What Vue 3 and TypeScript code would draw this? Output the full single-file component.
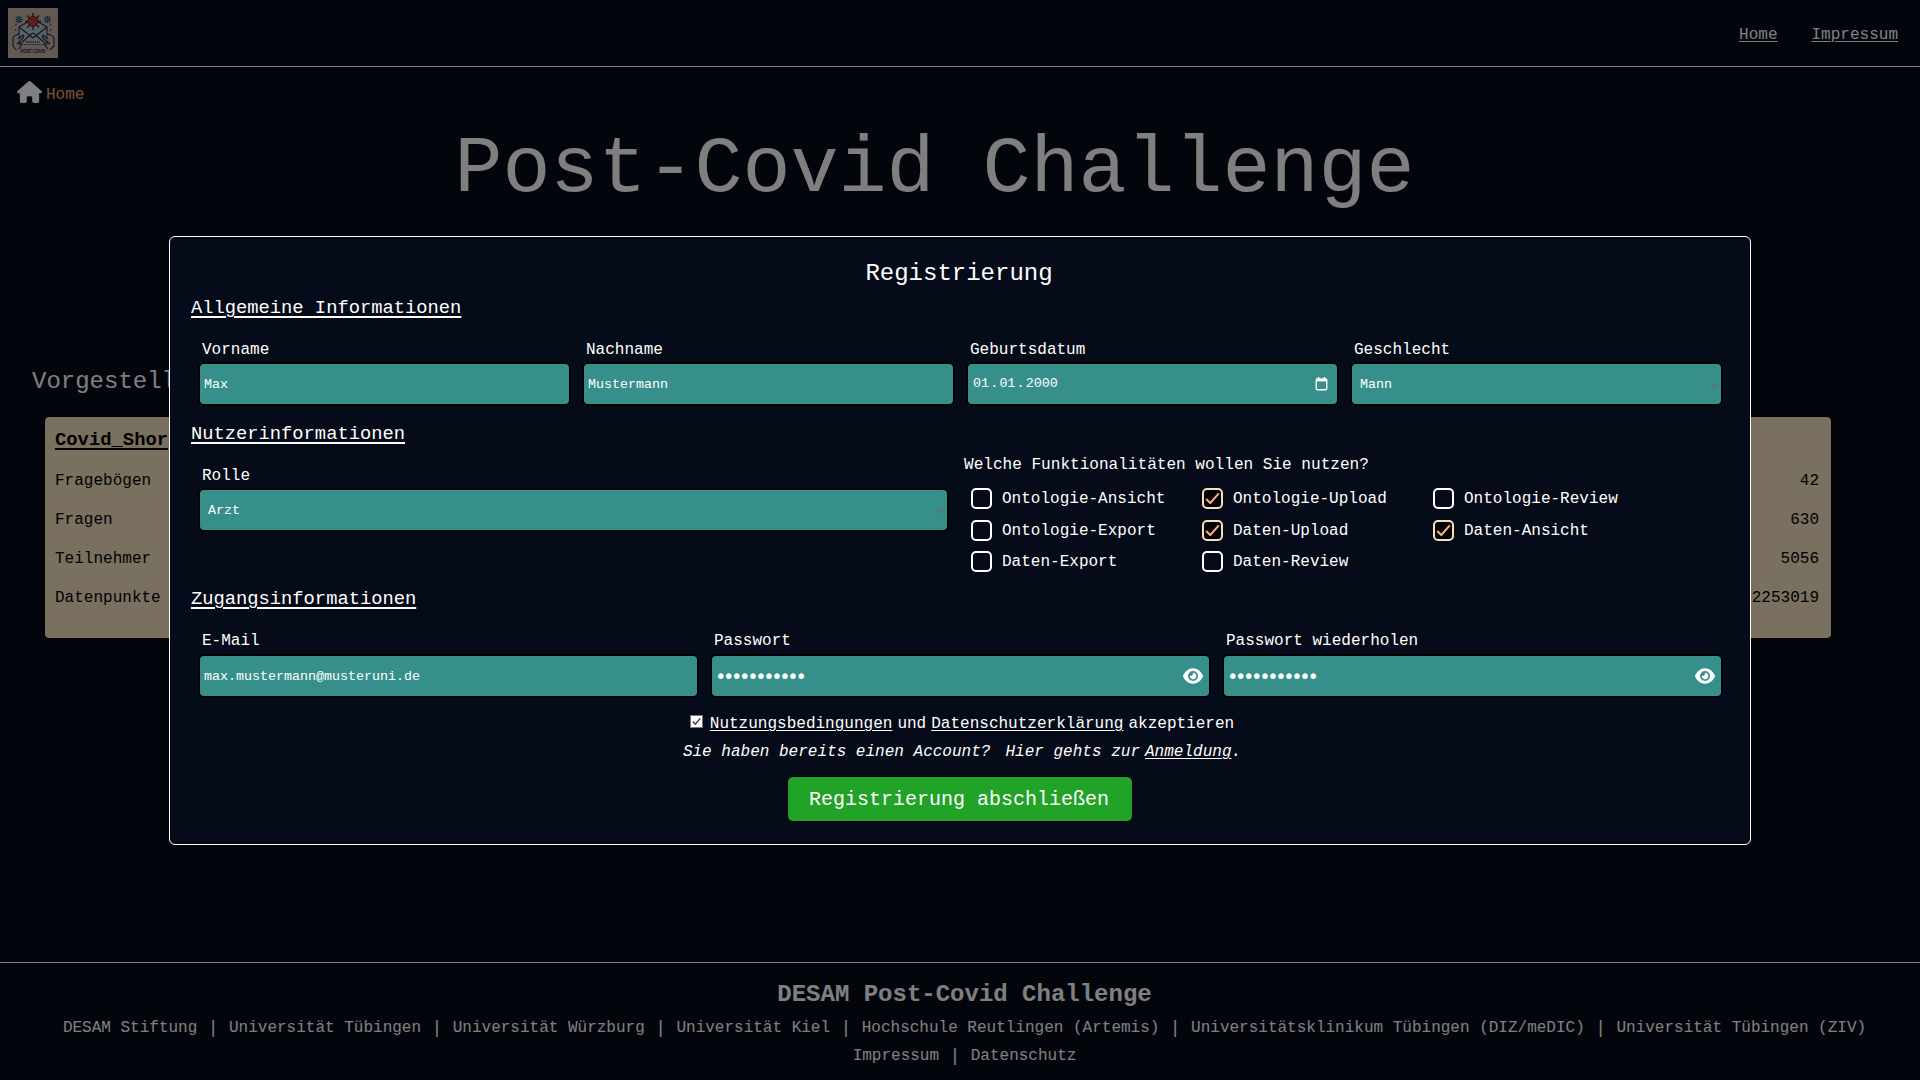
<script setup lang="ts">
interface Feature { label: string; checked: boolean }

const stats: [string, string][] = [
  ['Fragebögen', '42'],
  ['Fragen', '630'],
  ['Teilnehmer', '5056'],
  ['Datenpunkte', '2253019'],
]

const features: Feature[] = [
  { label: 'Ontologie-Ansicht', checked: false },
  { label: 'Ontologie-Upload', checked: true },
  { label: 'Ontologie-Review', checked: false },
  { label: 'Ontologie-Export', checked: false },
  { label: 'Daten-Upload', checked: true },
  { label: 'Daten-Ansicht', checked: true },
  { label: 'Daten-Export', checked: false },
  { label: 'Daten-Review', checked: false },
]

const partners: string[] = [
  'DESAM Stiftung',
  'Universität Tübingen',
  'Universität Würzburg',
  'Universität Kiel',
  'Hochschule Reutlingen (Artemis)',
  'Universitätsklinikum Tübingen (DIZ/meDIC)',
  'Universität Tübingen (ZIV)',
]

const passwords: string[] = ['Passwort', 'Passwort wiederholen']
</script>

<template>
  <div class="page">
    <header class="topbar">
      <svg class="logo" viewBox="0 0 50 50">
        <rect width="50" height="50" fill="#c4b3a4" />
        <g stroke="#1d2c44" stroke-width="1.1" fill="none" stroke-linejoin="round">
          <path d="M11 19 25 11 39 19V36H11z" fill="#b9c2ca" />
          <path d="M11 19 25 30 39 19M12 36 24 25.5Q25 24.5 26 25.5L38 36" fill="#b9c2ca" />
          <path d="M11 26Q5 27 5 31V38L8.500 42M9 36 14 31Q17 28 15 27L10 31M14 36 11 41" fill="#c4b3a4" />
          <path d="M39 26Q46 27 46 31V38L42 42M42 36 36 31Q33 28 35 27L40 31M36 36 40 41" fill="#c4b3a4" />
          <path d="M25 5V22M17 13.500H33M19 7.500 31 19.500M31 7.500 19 19.500" stroke-width="1.300" />
          <path d="M11 8V15M7.500 11.500H14.500M8.500 9 13.500 14M13.500 9 8.500 14M39.500 8V15M36 11.500H43M37 9 42 14M42 9 37 14" />
        </g>
        <circle cx="25" cy="13.500" r="5" fill="#d83a30" stroke="#4a2030" />
        <path d="M23 11.500h1.500M26 13h1.500M23 15.500h1.500M27 10.500h1" stroke="#701c24" stroke-width="1.200" />
        <circle cx="11" cy="11.500" r="2" fill="#2e83a8" /><circle cx="39.500" cy="11.500" r="2" fill="#2e83a8" />
        <path d="M7 16.500h2M41.500 16.500h2" stroke="#a05058" stroke-width="2" />
        <path d="M7 22h1.500M42 22h1.500M18 34h14" stroke="#1d2c44" stroke-width="1.300" stroke-dasharray="1.200 1" />
        <text x="25" y="45" text-anchor="middle" textLength="25" class="logo-text">POST COVID</text>
      </svg>
      <nav><a>Home</a><a>Impressum</a></nav>
    </header>

    <main>
      <div class="crumb">
        <svg viewBox="0 0 576 512"><path fill="#fff" d="M575.8 255.500c0 18-15 32.100-32 32.100h-32l.7 160.200c0 2.700-.2 5.400-.5 8.100V472c0 22.100-17.900 40-40 40H392c-22.100 0-40-17.900-40-40V384c0-17.700-14.300-32-32-32H256c-17.700 0-32 14.300-32 32v88c0 22.100-17.900 40-40 40H104c-22.100 0-40-17.900-40-40V287.600H32c-18 0-32-14-32-32.100c0-9 3-17 10-24L266.400 8c7-7 15-8 22-8s15 2 21 7L564.800 231.500c8 7 12 15 11 24z" /></svg>
        <span>Home</span>
      </div>
      <h1>Post-Covid Challenge</h1>
      <h2>Vorgestell</h2>
      <section class="card">
        <h3>Covid_Shor</h3>
        <div v-for="[name, value] in stats" :key="name" class="stat"><span>{{ name }}</span><span>{{ value }}</span></div>
      </section>
    </main>

    <footer>
      <h2>DESAM Post-Covid Challenge</h2>
      <div class="links">
        <template v-for="(p, i) in partners" :key="p"><i v-if="i" class="bar">|</i><span>{{ p }}</span></template>
      </div>
      <div class="links"><span>Impressum</span><i class="bar">|</i><span>Datenschutz</span></div>
    </footer>

    <div class="overlay">
      <form class="modal" @submit.prevent>
        <h2>Registrierung</h2>
        <h3>Allgemeine Informationen</h3>
        <div class="row">
          <div class="field"><label>Vorname</label><div class="box">Max</div></div>
          <div class="field"><label>Nachname</label><div class="box">Mustermann</div></div>
          <div class="field">
            <label>Geburtsdatum</label>
            <div class="box date">
              <span>01<b>.</b>01<b>.</b>2000</span>
              <svg class="cal" viewBox="0 0 13 14"><path d="M3.500 0V3M9.500 0V3" stroke="#fff" stroke-width="1.500" /><rect x="1.250" y="2" width="10.500" height="10.750" rx="1" fill="none" stroke="#fff" stroke-width="1.300" /><path d="M1 3.200H12" stroke="#fff" stroke-width="2.400" /></svg>
            </div>
          </div>
          <div class="field">
            <label>Geschlecht</label>
            <div class="box select">Mann<svg class="chev" viewBox="0 0 10 6"><path d="M1 .8 5 4.800 9 .8" /></svg></div>
          </div>
        </div>

        <h3>Nutzerinformationen</h3>
        <div class="role">
          <div class="field">
            <label>Rolle</label>
            <div class="box select">Arzt<svg class="chev" viewBox="0 0 10 6"><path d="M1 .8 5 4.800 9 .8" /></svg></div>
          </div>
          <div class="features">
            <p>Welche Funktionalitäten wollen Sie nutzen?</p>
            <div class="grid">
              <div v-for="f in features" :key="f.label" class="feature">
                <span class="check" :class="{ on: f.checked }"><svg v-if="f.checked" viewBox="0 0 17 17"><path d="M2.200 9 6.300 13 14.800 3.300" /></svg></span><span class="name">{{ f.label }}</span>
              </div>
            </div>
          </div>
        </div>

        <h3>Zugangsinformationen</h3>
        <div class="row access">
          <div class="field"><label>E-Mail</label><div class="box">max.mustermann@musteruni.de</div></div>
          <div v-for="p in passwords" :key="p" class="field">
            <label>{{ p }}</label>
            <div class="box secret">
              <input type="password" value="mustermann1" />
              <svg class="eye" viewBox="0 0 576 512"><path fill="#fff" d="M288 32c-80.800 0-145.500 36.800-192.600 80.600C48.600 156 17.300 208 2.500 243.700c-3.300 7.900-3.300 16.700 0 24.600C17.300 304 48.600 356 95.400 399.400C142.500 443.200 207.200 480 288 480s145.500-36.800 192.600-80.600c46.800-43.500 78.100-95.400 93-131.100c3.300-7.900 3.300-16.700 0-24.600c-14.900-35.700-46.200-87.700-93-131.100C433.500 68.800 368.800 32 288 32zM144 256a144 144 0 1 1 288 0 144 144 0 1 1 -288 0zm144-64c0 35.300-28.700 64-64 64c-7.100 0-13.900-1.200-20.300-3.300c-5.500-1.800-11.900 1.600-11.700 7.400c.3 6.900 1.300 13.800 3.200 20.700c13.700 51.200 66.400 81.600 117.600 67.900s81.600-66.400 67.900-117.600c-11.100-41.500-47.800-69.400-88.600-71.100c-5.800-.2-9.200 6.100-7.400 11.700c2.100 6.400 3.300 13.200 3.300 20.300z" /></svg>
            </div>
          </div>
        </div>

        <div class="terms">
          <svg class="tick" viewBox="0 0 13 13"><rect x=".5" y=".5" width="12" height="12" fill="#fff" stroke="#767676" /><path d="M2.800 6.500 5.300 9.200 10.300 3.300" fill="none" stroke="#333" stroke-width="1.300" /></svg>
          <a>Nutzungsbedingungen</a><span>und</span><a>Datenschutzerklärung</a><span>akzeptieren</span>
        </div>
        <div class="login"><span class="ask">Sie haben bereits einen Account?</span><span>Hier gehts zur</span><span><a>Anmeldung</a>.</span></div>
        <button>Registrierung abschließen</button>
      </form>
    </div>
  </div>
</template>

<style>
html, body { margin: 0; background: #050b18; overflow: hidden; }
</style>

<style scoped>
* { box-sizing: border-box; }
.page { position: relative; display: flex; flex-direction: column; width: 1920px; height: 1080px; background: #050b18; color: #fff; font: 16.030px/18px "Liberation Mono", monospace; white-space: nowrap; }
h1, h2, h3, p { margin: 0; font-weight: 400; }

.topbar { display: flex; flex: none; justify-content: space-between; height: 67px; padding: 8px 22px 0 8px; border-bottom: 1px solid #fff; }
.logo { width: 50px; height: 50px; }
.logo-text { font: bold 4.500px "Liberation Sans", sans-serif; fill: #1d2c44; }
nav { display: flex; gap: 34px; padding-top: 18px; }
a { text-decoration: underline; text-underline-offset: 2px; text-decoration-thickness: 1px; }

main { flex: none; height: 895px; }
.crumb { display: flex; gap: 4px; height: 40px; padding: 14px 0 0 17px; color: #f4a460; }
.crumb svg { width: 25px; height: 22px; }
.crumb span { padding-top: 5px; }
h1 { margin-top: 12px; padding-right: 51px; font-size: 80px; line-height: 102px; text-align: center; }
main h2 { margin: 146px 0 0 32px; font-size: 24px; line-height: 30px; }
.card { width: 1788px; height: 223px; margin: 19px 0 0 44px; padding: 12px 12px 0 10px; background: #f4e0c0; border: 1px solid #000; border-radius: 5px; color: #000; }
.card h3 { margin-bottom: 21px; font-size: 18.850px; font-weight: 700; line-height: 22px; text-decoration: underline; text-underline-offset: 3px; text-decoration-thickness: 2px; }
.stat { display: flex; justify-content: space-between; height: 39px; }

footer { flex: 1; padding: 17px 0 0 9px; border-top: 1px solid #fff; text-align: center; }
footer h2 { margin-bottom: 4px; font-size: 24px; font-weight: 700; line-height: 30px; }
footer .links { display: flex; justify-content: center; height: 28px; font-size: 16px; line-height: 28px; }
.bar { width: 31.700px; font-style: normal; font-size: 18px; }

.overlay { position: absolute; inset: 0; padding: 236px 169px 0; background: rgba(0, 0, 0, .5); }
.modal { height: 609px; padding: 22px 21px 0; background: #050b18; border: 1px solid #fff; border-radius: 6px; }
.modal h2 { padding-right: 2px; font-size: 24px; line-height: 30px; text-align: center; }
.modal h3 { margin: 17px 0 22px; font-size: 18.770px; line-height: 22px; text-decoration: underline; text-underline-offset: 3px; text-decoration-thickness: 2px; }
.modal h2 + h3 { margin-top: 8px; }
.row { display: flex; gap: 11px; padding: 0 6px 0 7px; }
.row .field { flex: 1; }
label { display: block; margin: 0 0 3px 4px; }
.access label { margin-bottom: 4px; }
.box { display: flex; align-items: center; height: 44px; padding: 2px 4px 0; background: #378f8b; border: 2px solid #000; border-radius: 6px; font-size: 13.333px; }
.select { justify-content: space-between; padding: 2px 2px 0 8px; }
.date { justify-content: space-between; padding: 0 9px 0 5px; }
.date b { margin: 0 1.200px; font-weight: 400; }
.cal { width: 13px; height: 14px; }
.chev { width: 10px; height: 6px; fill: none; stroke: #5d7673; stroke-width: 1.800; }
.role { display: flex; height: 104px; padding-left: 7px; }
.role .field { width: 751px; }
.features { margin: -11px 0 0 15px; }
.features p { font-size: 16.070px; }
.grid { display: grid; grid-template-columns: repeat(3, 231px); grid-auto-rows: 31.500px; margin-top: 9px; padding-left: 7px; }
.feature { display: flex; align-items: center; gap: 10px; }
.name { padding-top: 1px; }
.check { width: 21px; height: 21px; border: 2px solid #fff; border-radius: 5px; }
.check.on { background: #000; border-color: #f6dfbd; }
.check svg { display: block; width: 17px; height: 17px; fill: none; stroke: #ffb07c; stroke-width: 2; }
.secret { justify-content: space-between; padding: 0 6px 0 3px; }
.secret input { width: 300px; padding: 0; border: 0; outline: 0; background: none; color: #fff; font: 19px "DejaVu Sans Mono", monospace; letter-spacing: -3.400px; }
.eye { width: 20px; height: 18px; }
.terms, .login { display: flex; justify-content: center; gap: 5px; height: 22px; line-height: 22px; }
.terms { margin-top: 15px; padding-left: 4px; }
.tick { width: 13px; height: 13px; margin: 2px 2px 0 0; }
.login { margin-top: 6px; padding-left: 4px; font-style: italic; }
.ask { margin-right: 10px; }
button { display: block; width: 346px; height: 46px; margin: 13px auto 0; padding: 0 2px 0 0; border: 1px solid #000; border-radius: 6px; background: #20a326; color: #fff; font: 20px "Liberation Mono", monospace; }
</style>
